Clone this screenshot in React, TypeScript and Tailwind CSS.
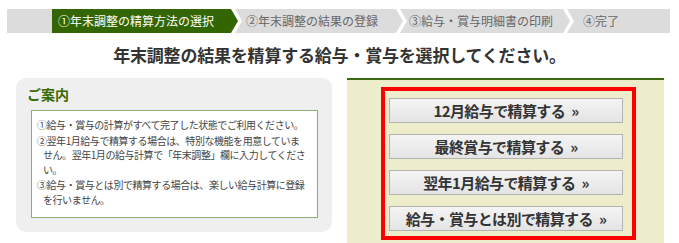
import React from 'react';

const steps = [
  { label: '①年末調整の精算方法の選択', width: 'w-[176px] pl-[6px]', active: true },
  { label: '②年末調整の結果の登録', width: 'w-[151px] pl-[4px]', active: false },
  { label: '③給与・賞与明細書の印刷', width: 'w-[153px] pl-[2px]', active: false },
  { label: '④完了', width: 'flex-1 pl-[9px]', active: false },
];

const buttons = ['12月給与で精算する', '最終賞与で精算する', '翌年1月給与で精算する', '給与・賞与とは別で精算する'];

// chevron between two steps (left colour = previous step)
const Separator: React.FC<{ left: string }> = ({ left }) => (
  <svg width="14" height="24" viewBox="0 0 14 24" className="shrink-0 block">
    <rect x="0" y="0" width="14" height="24" fill="#dcdcdc" />
    <polygon points="0,0 7,0 14,12 7,24 0,24" fill="#ffffff" />
    <polygon points="0,0 3,0 10,12 3,24 0,24" fill={left} />
  </svg>
);

const App: React.FC = () => {
  return (
    <div
      className="w-[679px] h-[243px] bg-white overflow-hidden text-[#333]"
      style={{ fontFamily: '"Noto Sans CJK JP", "Noto Sans", sans-serif' }}
    >
      {/* Step bar */}
      <div className="mt-[9px] ml-[7px] w-[663px] h-[24px] flex bg-[#dcdcdc]">
        <div className="w-[45px] shrink-0" />
        {steps.map((step, i) => (
          <React.Fragment key={step.label}>
            {i > 0 && <Separator left={steps[i - 1].active ? '#336600' : '#dcdcdc'} />}
            <div
              className={`${step.width} shrink-0 h-full flex items-center text-[12px] whitespace-nowrap ${
                step.active ? 'bg-[#336600] text-white' : 'text-[#666]'
              }`}
            >
              {step.label}
            </div>
          </React.Fragment>
        ))}
      </div>

      {/* Title */}
      <h1 className="mt-[10px] h-[24px] leading-[24px] text-center text-[17px] font-bold text-[#333] tracking-[-0.2px]">
        年末調整の結果を精算する給与・賞与を選択してください。
      </h1>

      <div className="mt-[11px] flex">
        {/* Guide panel */}
        <div className="ml-[16px] w-[316px] h-[154px] rounded-[10px] bg-[#efefef] pt-[7px]">
          <div className="pl-[11px] h-[18px] leading-[18px] text-[14px] font-bold text-[#3a6b00]">ご案内</div>
          <div className="mt-[7px] ml-[15px] w-[287px] h-[108px] bg-white border border-[#8fad6c] pt-[7px] pl-[5px] text-[10px] leading-[14.5px] tracking-[-0.45px] text-[#444] whitespace-nowrap">
            <p className="mb-[1px]">①給与・賞与の計算がすべて完了した状態でご利用ください。</p>
            <p className="mb-[1px] pl-[6px] -indent-[6px]">
              ②翌年1月給与で精算する場合は、特別な機能を用意していま
              <br />
              せん。翌年1月の給与計算で「年末調整」欄に入力してくださ
              <br />
              い。
            </p>
            <p className="pl-[6px] -indent-[6px]">
              ③給与・賞与とは別で精算する場合は、楽しい給与計算に登録
              <br />
              を行いません。
            </p>
          </div>
        </div>

        {/* Selection panel */}
        <div className="ml-[15px] w-[317px] h-[165px] bg-[#ededcc] border-t-2 border-[#3b6a12] pt-[7px]">
          <div className="ml-[34px] w-[255px] h-[153px] border-4 border-[#ff0000] pt-[7px] pl-[4px] flex flex-col gap-[11px]">
            {buttons.map((label) => (
              <button
                key={label}
                className="w-[234px] h-[25px] shrink-0 flex items-center justify-center bg-gradient-to-b from-[#f4f4f4] to-[#e4e4e4] border border-[#b4b4b4] text-[15px] font-bold text-[#333] leading-none tracking-[-0.6px]"
              >
                {label}
                <span className="ml-[6px]">»</span>
              </button>
            ))}
          </div>
        </div>
      </div>
    </div>
  );
};

export default App;
